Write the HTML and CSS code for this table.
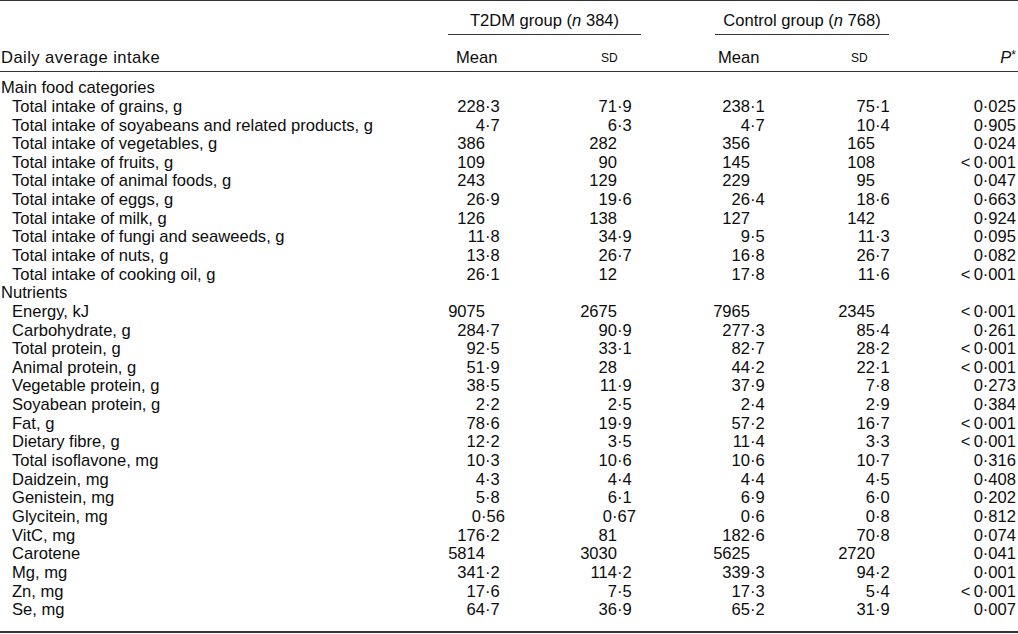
FILE: index.html
```html
<!DOCTYPE html>
<html>
<head>
<meta charset="utf-8">
<link rel="stylesheet" href="styles.css">
</head>
<body>
<div class="table">
  <div class="hrow1">
    <div class="grp g1">T2DM group (<i>n</i> 384)</div>
    <div class="grp g2">Control group (<i>n</i> 768)</div>
  </div>
  <div class="hrow2">
    <div class="lab0">Daily average intake</div>
    <div class="hm1">Mean</div>
    <div class="hs1 sd">SD</div>
    <div class="hm2">Mean</div>
    <div class="hs2 sd">SD</div>
    <div class="hp"><i>P</i><sup>*</sup></div>
  </div>
  <div class="body">
    <div class="row"><div class="sec">Main food categories</div></div>
    <div class="row"><div class="lab">Total intake of grains, g</div><div class="n"><span class="i">228</span><span>·3</span></div><div class="n"><span class="i">71</span><span>·9</span></div><div class="n"><span class="i">238</span><span>·1</span></div><div class="n"><span class="i">75</span><span>·1</span></div><div class="p">0·025</div></div>
    <div class="row"><div class="lab">Total intake of soyabeans and related products, g</div><div class="n"><span class="i">4</span><span>·7</span></div><div class="n"><span class="i">6</span><span>·3</span></div><div class="n"><span class="i">4</span><span>·7</span></div><div class="n"><span class="i">10</span><span>·4</span></div><div class="p">0·905</div></div>
    <div class="row"><div class="lab">Total intake of vegetables, g</div><div class="n"><span class="i">386</span></div><div class="n"><span class="i">282</span></div><div class="n"><span class="i">356</span></div><div class="n"><span class="i">165</span></div><div class="p">0·024</div></div>
    <div class="row"><div class="lab">Total intake of fruits, g</div><div class="n"><span class="i">109</span></div><div class="n"><span class="i">90</span></div><div class="n"><span class="i">145</span></div><div class="n"><span class="i">108</span></div><div class="p">&lt;&#8201;0·001</div></div>
    <div class="row"><div class="lab">Total intake of animal foods, g</div><div class="n"><span class="i">243</span></div><div class="n"><span class="i">129</span></div><div class="n"><span class="i">229</span></div><div class="n"><span class="i">95</span></div><div class="p">0·047</div></div>
    <div class="row"><div class="lab">Total intake of eggs, g</div><div class="n"><span class="i">26</span><span>·9</span></div><div class="n"><span class="i">19</span><span>·6</span></div><div class="n"><span class="i">26</span><span>·4</span></div><div class="n"><span class="i">18</span><span>·6</span></div><div class="p">0·663</div></div>
    <div class="row"><div class="lab">Total intake of milk, g</div><div class="n"><span class="i">126</span></div><div class="n"><span class="i">138</span></div><div class="n"><span class="i">127</span></div><div class="n"><span class="i">142</span></div><div class="p">0·924</div></div>
    <div class="row"><div class="lab">Total intake of fungi and seaweeds, g</div><div class="n"><span class="i">11</span><span>·8</span></div><div class="n"><span class="i">34</span><span>·9</span></div><div class="n"><span class="i">9</span><span>·5</span></div><div class="n"><span class="i">11</span><span>·3</span></div><div class="p">0·095</div></div>
    <div class="row"><div class="lab">Total intake of nuts, g</div><div class="n"><span class="i">13</span><span>·8</span></div><div class="n"><span class="i">26</span><span>·7</span></div><div class="n"><span class="i">16</span><span>·8</span></div><div class="n"><span class="i">26</span><span>·7</span></div><div class="p">0·082</div></div>
    <div class="row"><div class="lab">Total intake of cooking oil, g</div><div class="n"><span class="i">26</span><span>·1</span></div><div class="n"><span class="i">12</span></div><div class="n"><span class="i">17</span><span>·8</span></div><div class="n"><span class="i">11</span><span>·6</span></div><div class="p">&lt;&#8201;0·001</div></div>
    <div class="row"><div class="sec">Nutrients</div></div>
    <div class="row"><div class="lab">Energy, kJ</div><div class="n"><span class="i">9075</span></div><div class="n"><span class="i">2675</span></div><div class="n"><span class="i">7965</span></div><div class="n"><span class="i">2345</span></div><div class="p">&lt;&#8201;0·001</div></div>
    <div class="row"><div class="lab">Carbohydrate, g</div><div class="n"><span class="i">284</span><span>·7</span></div><div class="n"><span class="i">90</span><span>·9</span></div><div class="n"><span class="i">277</span><span>·3</span></div><div class="n"><span class="i">85</span><span>·4</span></div><div class="p">0·261</div></div>
    <div class="row"><div class="lab">Total protein, g</div><div class="n"><span class="i">92</span><span>·5</span></div><div class="n"><span class="i">33</span><span>·1</span></div><div class="n"><span class="i">82</span><span>·7</span></div><div class="n"><span class="i">28</span><span>·2</span></div><div class="p">&lt;&#8201;0·001</div></div>
    <div class="row"><div class="lab">Animal protein, g</div><div class="n"><span class="i">51</span><span>·9</span></div><div class="n"><span class="i">28</span></div><div class="n"><span class="i">44</span><span>·2</span></div><div class="n"><span class="i">22</span><span>·1</span></div><div class="p">&lt;&#8201;0·001</div></div>
    <div class="row"><div class="lab">Vegetable protein, g</div><div class="n"><span class="i">38</span><span>·5</span></div><div class="n"><span class="i">11</span><span>·9</span></div><div class="n"><span class="i">37</span><span>·9</span></div><div class="n"><span class="i">7</span><span>·8</span></div><div class="p">0·273</div></div>
    <div class="row"><div class="lab">Soyabean protein, g</div><div class="n"><span class="i">2</span><span>·2</span></div><div class="n"><span class="i">2</span><span>·5</span></div><div class="n"><span class="i">2</span><span>·4</span></div><div class="n"><span class="i">2</span><span>·9</span></div><div class="p">0·384</div></div>
    <div class="row"><div class="lab">Fat, g</div><div class="n"><span class="i">78</span><span>·6</span></div><div class="n"><span class="i">19</span><span>·9</span></div><div class="n"><span class="i">57</span><span>·2</span></div><div class="n"><span class="i">16</span><span>·7</span></div><div class="p">&lt;&#8201;0·001</div></div>
    <div class="row"><div class="lab">Dietary fibre, g</div><div class="n"><span class="i">12</span><span>·2</span></div><div class="n"><span class="i">3</span><span>·5</span></div><div class="n"><span class="i">11</span><span>·4</span></div><div class="n"><span class="i">3</span><span>·3</span></div><div class="p">&lt;&#8201;0·001</div></div>
    <div class="row"><div class="lab">Total isoflavone, mg</div><div class="n"><span class="i">10</span><span>·3</span></div><div class="n"><span class="i">10</span><span>·6</span></div><div class="n"><span class="i">10</span><span>·6</span></div><div class="n"><span class="i">10</span><span>·7</span></div><div class="p">0·316</div></div>
    <div class="row"><div class="lab">Daidzein, mg</div><div class="n"><span class="i">4</span><span>·3</span></div><div class="n"><span class="i">4</span><span>·4</span></div><div class="n"><span class="i">4</span><span>·4</span></div><div class="n"><span class="i">4</span><span>·5</span></div><div class="p">0·408</div></div>
    <div class="row"><div class="lab">Genistein, mg</div><div class="n"><span class="i">5</span><span>·8</span></div><div class="n"><span class="i">6</span><span>·1</span></div><div class="n"><span class="i">6</span><span>·9</span></div><div class="n"><span class="i">6</span><span>·0</span></div><div class="p">0·202</div></div>
    <div class="row"><div class="lab">Glycitein, mg</div><div class="n two"><span class="i">0</span><span>·56</span></div><div class="n two"><span class="i">0</span><span>·67</span></div><div class="n"><span class="i">0</span><span>·6</span></div><div class="n"><span class="i">0</span><span>·8</span></div><div class="p">0·812</div></div>
    <div class="row"><div class="lab">VitC, mg</div><div class="n"><span class="i">176</span><span>·2</span></div><div class="n"><span class="i">81</span></div><div class="n"><span class="i">182</span><span>·6</span></div><div class="n"><span class="i">70</span><span>·8</span></div><div class="p">0·074</div></div>
    <div class="row"><div class="lab">Carotene</div><div class="n"><span class="i">5814</span></div><div class="n"><span class="i">3030</span></div><div class="n"><span class="i">5625</span></div><div class="n"><span class="i">2720</span></div><div class="p">0·041</div></div>
    <div class="row"><div class="lab">Mg, mg</div><div class="n"><span class="i">341</span><span>·2</span></div><div class="n"><span class="i">114</span><span>·2</span></div><div class="n"><span class="i">339</span><span>·3</span></div><div class="n"><span class="i">94</span><span>·2</span></div><div class="p">0·001</div></div>
    <div class="row"><div class="lab">Zn, mg</div><div class="n"><span class="i">17</span><span>·6</span></div><div class="n"><span class="i">7</span><span>·5</span></div><div class="n"><span class="i">17</span><span>·3</span></div><div class="n"><span class="i">5</span><span>·4</span></div><div class="p">&lt;&#8201;0·001</div></div>
    <div class="row"><div class="lab">Se, mg</div><div class="n"><span class="i">64</span><span>·7</span></div><div class="n"><span class="i">36</span><span>·9</span></div><div class="n"><span class="i">65</span><span>·2</span></div><div class="n"><span class="i">31</span><span>·9</span></div><div class="p">0·007</div></div>
  </div>
</div>
</body>
</html>
```
FILE: styles.css
```css
html, body {
  margin: 0;
  padding: 0;
  background: #fff;
}
body {
  font-family: "Liberation Sans", Arial, sans-serif;
  font-size: 16.57px;
  line-height: 18.64px;
  color: #0d0d0d;
}
.table {
  width: 1018px;
  border-top: 1px solid #333;
  border-bottom: 2px solid #333;
}
.hrow1, .hrow2, .row {
  display: grid;
  grid-template-columns: 440px 130px 130px 130px 130px 1fr;
}
.hrow1 {
  padding-top: 10.7px;
}
.grp {
  text-align: center;
  padding-bottom: 3.7px;
  border-bottom: 1px solid #333;
  white-space: nowrap;
}
.g1 {
  grid-column: 2 / 4;
  margin: 0 59px 0 8px;
}
.g2 {
  grid-column: 4 / 6;
  margin: 0 71px 0 15px;
}
.hrow2 {
  padding-top: 13.7px;
  padding-bottom: 3.7px;
  border-bottom: 1px solid #333;
}
.lab0 {
  padding-left: 1px;
  letter-spacing: 0.45px;
}
.hm1 { padding-left: 16px; }
.hs1 { padding-left: 31px; }
.hm2 { padding-left: 18px; }
.hs2 { padding-left: 21px; }
.sd {
  font-size: 12px;
}
.hp {
  text-align: right;
  padding-right: 2px;
}
.hp sup {
  font-size: 12px;
  line-height: 0;
  vertical-align: 4px;
}
.body {
  padding-top: 7.2px;
  padding-bottom: 11px;
}
.sec {
  grid-column: 1 / -1;
  padding-left: 1px;
}
.lab {
  padding-left: 12px;
  white-space: nowrap;
}
.n {
  white-space: nowrap;
}
.n .i {
  display: inline-block;
  text-align: right;
}
.row > :nth-child(2) .i { width: 45px; }
.row > :nth-child(3) .i { width: 47px; }
.row > :nth-child(4) .i { width: 50px; }
.row > :nth-child(5) .i { width: 45px; }
.row > :nth-child(2).two .i { width: 41px; }
.row > :nth-child(3).two .i { width: 42px; }
.p {
  text-align: right;
  padding-right: 2px;
  white-space: nowrap;
}
```
